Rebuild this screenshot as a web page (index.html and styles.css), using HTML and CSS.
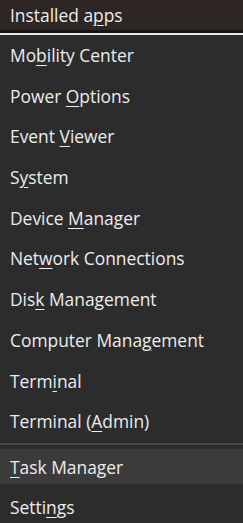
FILE: index.html
```html
<!DOCTYPE html>
<html>
<head>
<meta charset="utf-8">
<link rel="stylesheet" href="styles.css">
</head>
<body>
<div class="menu">
  <div class="top-item">Installed a<span class="ak">p</span>ps</div>
  <div class="rule-dark"></div>
  <div class="rule-light"></div>
  <ul class="list">
    <li class="item">Mo<span class="ak">b</span>ility Center</li>
    <li class="item">Power <span class="ak">O</span>ptions</li>
    <li class="item">Event <span class="ak">V</span>iewer</li>
    <li class="item">S<span class="ak">y</span>stem</li>
    <li class="item">Device <span class="ak">M</span>anager</li>
    <li class="item">Net<span class="ak">w</span>ork Connections</li>
    <li class="item">Dis<span class="ak">k</span> Management</li>
    <li class="item">Computer Mana<span class="ak">g</span>ement</li>
    <li class="item">Term<span class="ak">i</span>nal</li>
    <li class="item">Terminal (<span class="ak">A</span>dmin)</li>
  </ul>
  <div class="separator"></div>
  <ul class="list lower">
    <li class="item active"><span class="ak">T</span>ask Manager</li>
    <li class="item last">Setti<span class="ak">n</span>gs</li>
  </ul>
</div>
</body>
</html>
```
FILE: styles.css
```css
* { box-sizing: border-box; }
html, body {
  margin: 0;
  padding: 0;
  background: #2c2c2c;
  overflow: hidden;
}
.menu {
  width: 243px;
  height: 523px;
  font-family: "Open Sans", "Noto Sans", sans-serif;
  font-size: 17.4px;
  color: #ececec;
}
.top-item {
  height: 30px;
  line-height: 30px;
  background: #2d2624;
  padding-left: 10px;
  white-space: nowrap;
}
.rule-dark { height: 3px; background: #161413; }
.rule-light { height: 2px; background: #e6e6e6; }
.list {
  list-style: none;
  margin: 0;
  padding: 0;
}
.item {
  height: 40.7px;
  line-height: 40.7px;
  padding-left: 10px;
  white-space: nowrap;
}
.separator {
  height: 2px;
  margin-top: 1px;
  background: #474747;
}
.lower { padding-top: 4px; }
.item.active {
  height: 35px;
  line-height: 36px;
  background: #3b3b3b;
}
.item.last {
  padding-top: 3px;
}
.ak {
  text-decoration: underline;
  text-underline-offset: 3px;
  text-decoration-thickness: 1px;
}
```
